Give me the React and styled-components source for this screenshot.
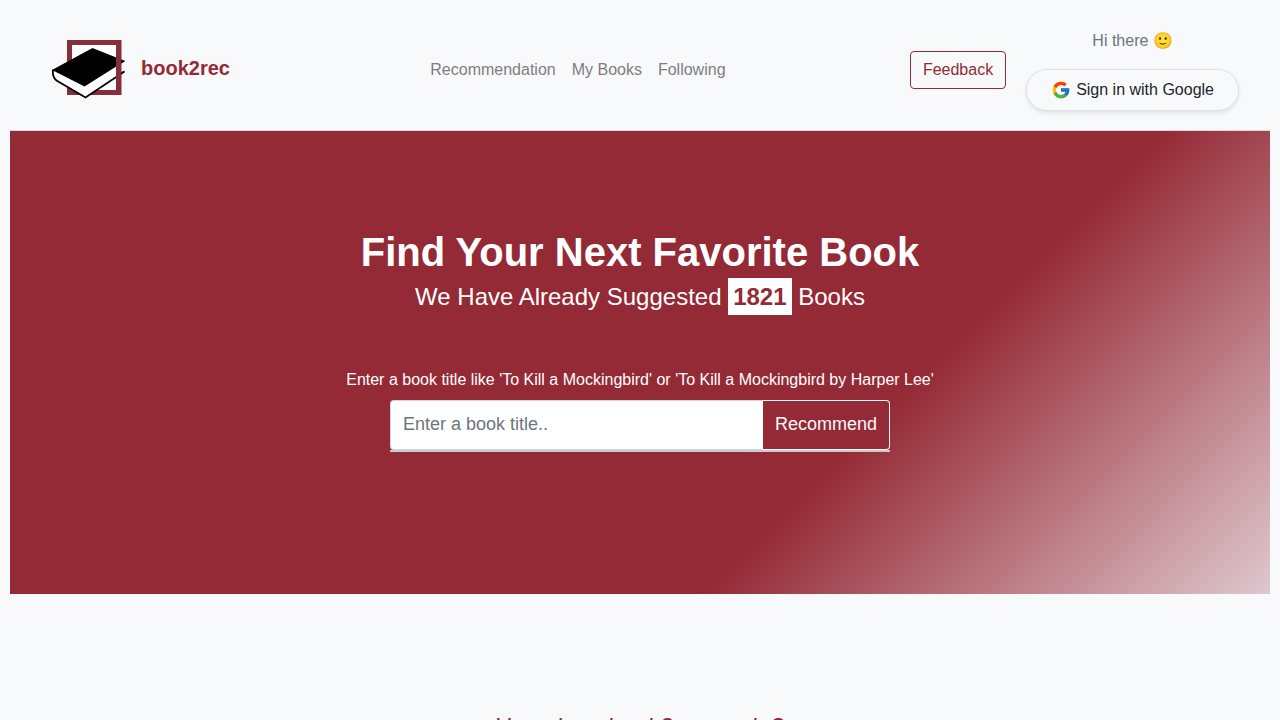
import React, { useState } from 'react';
import { FcGoogle } from 'react-icons/fc';
import styled, { createGlobalStyle } from 'styled-components';

const links = ['Recommendation', 'My Books', 'Following'];

function Logo() {
	return (
		<svg width='92' height='64' viewBox='40 36 92 64' aria-hidden='true'>
			<rect x='69.5' y='42.5' width='49' height='50' fill='#fff' stroke='#852f3a' strokeWidth='5' />
			<path d='M53 70 L85 86 L121 62 L124 71 L86 97 L56 80 Q52 76 53 70Z' fill='#fff' />
			<path d='M52 70 L92.5 48 L125 61 L84.5 86.5Z' />
			<path
				d='M53 69.5 Q52 77 56.5 80.5 L85.5 97.5 L124.5 71.5'
				fill='none'
				stroke='#000'
				strokeWidth='1.8'
			/>
			<path d='M116 40 H121.5 V95 H116Z' fill='#852f3a' />
			<path d='M121.5 59.5 L125 61 L121.5 63.5Z M121.5 72 L125 70.5 L121.5 74.5Z' />
		</svg>
	);
}

function App() {
	const [title, setTitle] = useState('');

	return (
		<Page>
			<GlobalStyle />
			<Navbar>
				<Brand href='#'>
					<Logo />
					book2rec
				</Brand>
				<NavLinks>
					{links.map((link) => (
						<NavLink href='#' key={link}>
							{link}
						</NavLink>
					))}
				</NavLinks>
				<Actions>
					<FeedbackButton>Feedback</FeedbackButton>
					<User>
						<span>Hi there 🙂</span>
						<GoogleButton>
							<FcGoogle size={20} />
							Sign in with Google
						</GoogleButton>
					</User>
				</Actions>
			</Navbar>
			<Hero>
				<Title>Find Your Next Favorite Book</Title>
				<Subtitle>
					We Have Already Suggested <Count>1821</Count> Books
				</Subtitle>
				<Hint htmlFor='book-title'>
					Enter a book title like 'To Kill a Mockingbird' or 'To Kill a Mockingbird by Harper Lee'
				</Hint>
				<SearchForm onSubmit={(e) => e.preventDefault()}>
					<SearchInput
						id='book-title'
						type='text'
						placeholder='Enter a book title..'
						value={title}
						onChange={(e) => setTitle(e.target.value)}
					/>
					<SearchButton type='submit'>Recommend</SearchButton>
				</SearchForm>
			</Hero>
			<About>
				<AboutTitle>How does book2rec work ?</AboutTitle>
			</About>
		</Page>
	);
}

const GlobalStyle = createGlobalStyle`
	* {
		box-sizing: border-box;
	}

	body {
		margin: 0;
		background-color: #f7f9fb;
		color: #212529;
		font-family: 'Liberation Sans', Arial, sans-serif;
		font-size: 16px;
		line-height: 24px;
	}

	h1, h2, h3 {
		margin: 0;
	}

	button, input {
		font-family: inherit;
	}
`;

const Page = styled.div`
	padding: 10px;
`;

const Navbar = styled.nav`
	display: flex;
	align-items: center;
	justify-content: space-between;
	padding: 19px 31px 19px 30px;
	background-color: #f8f9fb;
	border-bottom: 1px solid #d8dce2;
`;

const Brand = styled.a`
	display: flex;
	align-items: center;
	gap: 9px;
	margin-right: 16px;
	padding-bottom: 4px;
	color: #942a36;
	font-size: 20px;
	font-weight: bold;
	text-decoration: none;
`;

const NavLinks = styled.div`
	display: flex;
`;

const NavLink = styled.a`
	padding: 8px;
	color: #7d7e7f;
	text-decoration: none;
`;

const Actions = styled.div`
	display: flex;
	align-items: center;
	gap: 20px;
`;

const FeedbackButton = styled.button`
	padding: 6px 12px;
	background-color: transparent;
	color: #942a36;
	border: 1px solid #942a36;
	border-radius: 4px;
	font-size: 16px;
	line-height: 24px;
	cursor: pointer;
`;

const User = styled.div`
	display: flex;
	flex-direction: column;
	align-items: center;
	gap: 16px;
	color: #6c757d;
`;

const GoogleButton = styled.button`
	display: flex;
	align-items: center;
	gap: 5px;
	padding: 8px 24px;
	background-color: #f8f9fb;
	color: #212529;
	border: 1px solid #dfe1e5;
	border-radius: 24px;
	box-shadow: 0 2px 4px rgba(0, 0, 0, 0.1);
	font-size: 16px;
	line-height: 24px;
	cursor: pointer;
`;

const Hero = styled.section`
	display: flex;
	flex-direction: column;
	align-items: center;
	padding: 97px 16px 142px;
	background-image: linear-gradient(135deg, #942a36 67%, #dfc8ce);
	color: white;
	text-align: center;
`;

const Title = styled.h1`
	font-size: 40px;
	line-height: 48px;
`;

const Subtitle = styled.h2`
	margin: 6px 0 57px;
	font-size: 24px;
	font-weight: normal;
	line-height: 29px;
`;

const Count = styled.span`
	padding: 5px;
	background-color: white;
	color: #942a36;
	font-weight: bold;
`;

const Hint = styled.label`
	margin-bottom: 8px;
`;

const SearchForm = styled.form`
	display: flex;
	width: 100%;
	max-width: 500px;
	border-bottom: 2px solid #ccc;
`;

const SearchInput = styled.input`
	flex: 1;
	min-width: 0;
	height: 50px;
	padding: 7px 12px 9px;
	background-color: white;
	color: #495057;
	border: 1px solid #ced4da;
	border-right: none;
	border-radius: 4px 0 0 4px;
	font-size: 18px;

	&::placeholder {
		color: #6c757d;
	}
`;

const SearchButton = styled.button`
	padding: 7px 12px 9px;
	background-color: #942a36;
	color: #f8f9fa;
	border: 1px solid #f8f9fa;
	border-left: none;
	border-radius: 0 4px 4px 0;
	font-size: 18px;
	cursor: pointer;
`;

const About = styled.section`
	padding-top: 118px;
	text-align: center;
`;

const AboutTitle = styled.h3`
	color: #942a36;
	font-size: 24px;
	font-weight: normal;
	line-height: 29px;
`;

export default App;
